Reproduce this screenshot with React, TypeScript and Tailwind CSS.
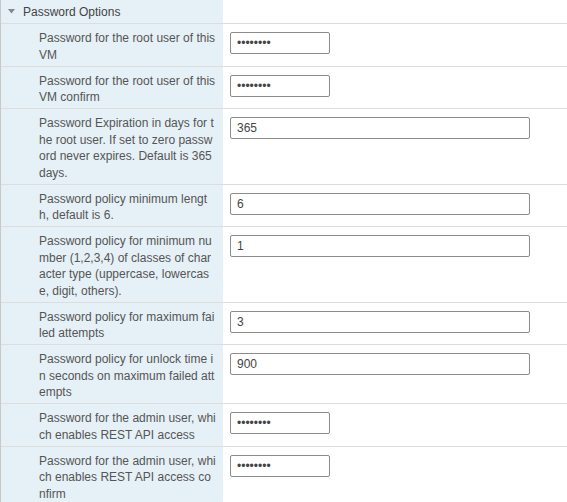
import React from 'react';

type Field = {
  lines: string[];
  value: string;
  secret?: boolean;
  wide?: boolean;
};

// label lines are kept exactly as the form wraps them (mid-word breaks included)
const fields: Field[] = [
  { lines: ['Password for the root user of this', 'VM'], value: 'password', secret: true },
  { lines: ['Password for the root user of this', 'VM confirm'], value: 'password', secret: true },
  {
    lines: [
      'Password Expiration in days for t',
      'he root user. If set to zero passw',
      'ord never expires. Default is 365',
      'days.',
    ],
    value: '365',
    wide: true,
  },
  { lines: ['Password policy minimum lengt', 'h, default is 6.'], value: '6', wide: true },
  {
    lines: [
      'Password policy for minimum nu',
      'mber (1,2,3,4) of classes of char',
      'acter type (uppercase, lowercas',
      'e, digit, others).',
    ],
    value: '1',
    wide: true,
  },
  { lines: ['Password policy for maximum fai', 'led attempts'], value: '3', wide: true },
  {
    lines: ['Password policy for unlock time i', 'n seconds on maximum failed att', 'empts'],
    value: '900',
    wide: true,
  },
  { lines: ['Password for the admin user, whi', 'ch enables REST API access'], value: 'password', secret: true },
  {
    lines: ['Password for the admin user, whi', 'ch enables REST API access co', 'nfirm'],
    value: 'password',
    secret: true,
  },
];

const FieldRow: React.FC<{ field: Field }> = ({ field }) => (
  <div className="grid grid-cols-[222px_1fr] border-b border-[#dddddd]">
    <div className="bg-[#e6f0f7] pl-[38px] pt-[6px] pb-[2.5px] text-[12px] leading-[16.5px] text-[#555555]">
      {field.lines.map((l, i) => (
        <div key={i} className="whitespace-nowrap">
          {l}
        </div>
      ))}
    </div>
    <div className="pl-[7px] pt-[6px]">
      <input
        type={field.secret ? 'password' : 'text'}
        defaultValue={field.value}
        className={`${field.wide ? 'w-[300px]' : 'w-[100px]'} h-[22px] rounded-[2px] border border-[#8c8c8c] bg-white px-[6px] text-[12px] text-[#444] outline-none`}
      />
    </div>
  </div>
);

const App: React.FC = () => {
  return (
    <div className="min-h-[502px] bg-white font-['Liberation_Sans',Arial,sans-serif]">
      <div className="border-l border-[#c8c8c8]">
        {/* Section header */}
        <div className="grid grid-cols-[222px_1fr] border-b border-[#dddddd]">
          <div className="flex h-[23px] items-center bg-[#e6f0f7] pl-[7px] text-[12px] text-[#444444]">
            <svg width="7" height="5" viewBox="0 0 7 5" className="mr-[8px]">
              <path d="M0 0 L7 0 L3.5 4.5 Z" fill="#888" />
            </svg>
            Password Options
          </div>
          <div />
        </div>

        {fields.map((f, i) => (
          <FieldRow key={i} field={f} />
        ))}
      </div>
    </div>
  );
};

export default App;
